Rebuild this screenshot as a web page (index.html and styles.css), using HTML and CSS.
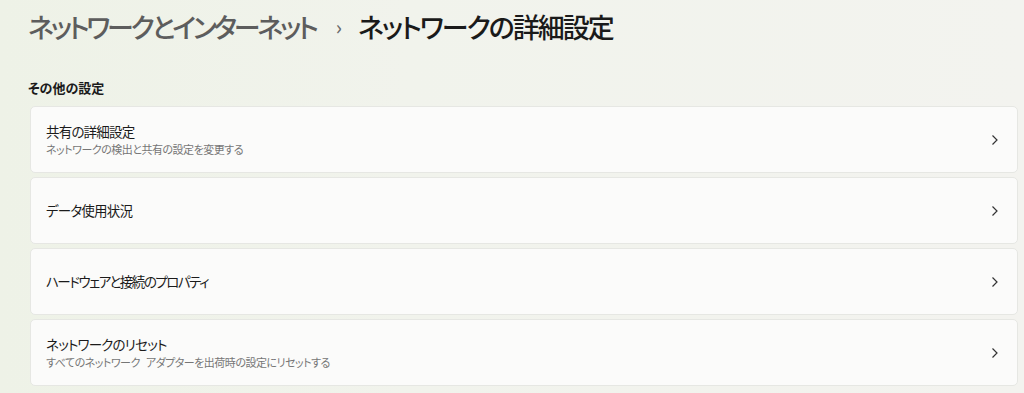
FILE: index.html
```html
<!DOCTYPE html>
<html lang="ja">
<head>
<meta charset="utf-8">
<title>ネットワークの詳細設定</title>
<link rel="stylesheet" href="styles.css">
</head>
<body>
<main class="page">
  <h1 class="crumbs">
    <span class="crumb-parent">ネットワークとインターネット</span>
    <span class="crumb-sep">›</span>
    <span class="crumb-current">ネットワークの詳細設定</span>
  </h1>
  <h2 class="section-title">その他の設定</h2>
  <div class="list">
    <div class="card">
      <div class="card-text">
        <div class="card-title">共有の詳細設定</div>
        <div class="card-sub">ネットワークの検出と共有の設定を変更する</div>
      </div>
      <svg class="chev" width="10" height="12" viewBox="0 0 10 12"><path d="M2.5 1.5 L7 6 L2.5 10.5" fill="none" stroke="#333" stroke-width="1.2"/></svg>
    </div>
    <div class="card">
      <div class="card-text">
        <div class="card-title">データ使用状況</div>
      </div>
      <svg class="chev" width="10" height="12" viewBox="0 0 10 12"><path d="M2.5 1.5 L7 6 L2.5 10.5" fill="none" stroke="#333" stroke-width="1.2"/></svg>
    </div>
    <div class="card">
      <div class="card-text">
        <div class="card-title narrow">ハードウェアと接続のプロパティ</div>
      </div>
      <svg class="chev" width="10" height="12" viewBox="0 0 10 12"><path d="M2.5 1.5 L7 6 L2.5 10.5" fill="none" stroke="#333" stroke-width="1.2"/></svg>
    </div>
    <div class="card">
      <div class="card-text">
        <div class="card-title">ネットワークのリセット</div>
        <div class="card-sub">すべてのネットワーク アダプターを出荷時の設定にリセットする</div>
      </div>
      <svg class="chev" width="10" height="12" viewBox="0 0 10 12"><path d="M2.5 1.5 L7 6 L2.5 10.5" fill="none" stroke="#333" stroke-width="1.2"/></svg>
    </div>
  </div>
</main>
</body>
</html>
```
FILE: styles.css
```css
html, body {
  margin: 0;
  height: 100%;
}
body {
  background: linear-gradient(90deg, #eef2e7 0%, #f1f3ec 40%, #f3f3ef 100%);
  font-family: "Noto Sans CJK JP", "Noto Sans", sans-serif;
  font-feature-settings: "palt";
  color: #1b1b1b;
  overflow: hidden;
}
.page {
  padding: 7px 6px 0 28px;
}
.crumbs {
  margin: 0;
  font-size: 27px;
  font-weight: 500;
  line-height: 40px;
  display: flex;
  align-items: center;
  white-space: nowrap;
}
.crumb-parent {
  color: #5d5d5d;
  letter-spacing: -3.2px;
}
.crumb-sep {
  color: #6a6a6a;
  font-size: 20px;
  margin: 0 16px 0 20px;
}
.crumb-current {
  color: #1a1a1a;
  letter-spacing: -2px;
}
.section-title {
  margin: 31px 0 0 0;
  font-size: 13px;
  font-weight: 700;
  line-height: 20px;
  color: #1b1b1b;
}
.list {
  margin-top: 8px;
  margin-left: 2px;
  display: flex;
  flex-direction: column;
  gap: 4px;
}
.card {
  height: 67px;
  box-sizing: border-box;
  background: #fbfbfa;
  border: 1px solid #e6e7e3;
  border-radius: 5px;
  display: flex;
  align-items: center;
  padding: 0 17px 0 15px;
}
.card-text {
  flex: 1;
  display: flex;
  flex-direction: column;
}
.card-title {
  font-size: 13.5px;
  line-height: 19px;
  color: #1b1b1b;
  letter-spacing: -0.8px;
}
.card-title.narrow {
  letter-spacing: -1.5px;
}
.card-sub {
  font-size: 11px;
  line-height: 16px;
  color: #767676;
  letter-spacing: -0.5px;
  word-spacing: 4px;
}
.chev {
  display: block;
}
```
